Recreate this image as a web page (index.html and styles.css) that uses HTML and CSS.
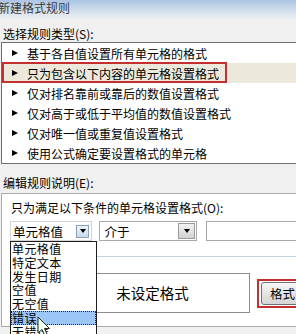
FILE: index.html
```html
<!DOCTYPE html>
<html lang="zh-CN">
<head>
    <meta charset="UTF-8">
    <title>新建格式规则</title>
    <link rel="stylesheet" href="styles.css">
</head>
<body>
    <div class="dialog">
        <div class="titlebar">新建格式规则</div>

        <div class="group-label">选择规则类型(S):</div>
        <div class="rule-list">
            <div class="rule-row"><span class="arrow"></span>基于各自值设置所有单元格的格式</div>
            <div class="rule-row selected"><span class="arrow"></span>只为包含以下内容的单元格设置格式</div>
            <div class="rule-row"><span class="arrow"></span>仅对排名靠前或靠后的数值设置格式</div>
            <div class="rule-row"><span class="arrow"></span>仅对高于或低于平均值的数值设置格式</div>
            <div class="rule-row"><span class="arrow"></span>仅对唯一值或重复值设置格式</div>
            <div class="rule-row"><span class="arrow"></span>使用公式确定要设置格式的单元格</div>
            <div class="mark-row"></div>
        </div>

        <div class="group-label second">编辑规则说明(E):</div>
        <div class="rule-panel">
            <div class="panel-label">只为满足以下条件的单元格设置格式(O):</div>
            <div class="controls">
                <div class="combo combo-open">
                    <span>单元格值</span>
                    <span class="drop-btn small"><span class="tri"></span></span>
                </div>
                <div class="combo combo-op">
                    <span>介于</span>
                    <span class="drop-btn"><span class="tri"></span></span>
                </div>
                <div class="textbox"></div>
            </div>
            <div class="separator"></div>
            <div class="preview-row">
                <div class="preview">未设定格式</div>
                <div class="mark-btn">
                    <button class="format-btn">格式(F)...</button>
                </div>
            </div>

            <ul class="drop-list">
                <li>单元格值</li>
                <li>特定文本</li>
                <li>发生日期</li>
                <li>空值</li>
                <li>无空值</li>
                <li class="hover">错误</li>
                <li>无错误</li>
            </ul>
            <svg class="cursor" width="14" height="22" viewBox="0 0 14 22">
                <path d="M1 1 L1 17 L5 13.5 L8 20 L10.5 19 L7.5 12.5 L12.5 12.5 Z" fill="#f4fff4" stroke="#1c2a1c" stroke-width="1"/>
            </svg>
        </div>
    </div>
</body>
</html>
```
FILE: styles.css
```css
body {
    margin: 0;
    width: 296px;
    height: 334px;
    overflow: hidden;
    background: #f0f0f0;
    font-family: "Noto Sans CJK SC", "Noto Sans", sans-serif;
    font-size: 12px;
    color: #000;
}
.dialog {
    width: 340px;
}
.titlebar {
    height: 20px;
    line-height: 16px;
    text-indent: -2px;
    color: #3c3c3c;
    background: linear-gradient(#abc5e3, #d6e1ec 60%, #eef0f2);
}
.group-label {
    margin-top: 7px;
    padding-left: 3px;
    line-height: 14px;
}
.group-label.second {
    margin-top: 12px;
}
.rule-list {
    position: relative;
    margin: 1px 0 0 1px;
    border: 1px solid #6f6f6f;
    border-right: none;
    background: #fff;
}
.rule-row {
    display: flex;
    align-items: center;
    height: 20px;
    white-space: nowrap;
}
.rule-row.selected {
    background: #ece9dc;
}
.arrow {
    width: 0;
    height: 0;
    margin: 0 9px 0 10px;
    border-left: 6px solid #000;
    border-top: 3.5px solid transparent;
    border-bottom: 3.5px solid transparent;
}
.mark-row {
    position: absolute;
    left: 0;
    top: 19px;
    width: 221px;
    height: 17px;
    border: 2px solid #c3302f;
}
.rule-panel {
    position: relative;
    height: 125px;
    margin: 3px 0 0 1px;
    padding: 7px 0 0 9px;
    border: 1px solid #a9a9a9;
    border-right: none;
    background: #fff;
}
.panel-label {
    line-height: 14px;
}
.controls {
    display: flex;
    margin-top: 6px;
    height: 20px;
}
.combo {
    display: flex;
    align-items: center;
    justify-content: space-between;
    box-sizing: border-box;
    height: 20px;
    font-size: 12.5px;
}
.combo-open {
    width: 86px;
    padding: 0 2px 0 2px;
    margin-left: -1px;
    border: 1px solid #d4d4d4;
}
.combo-op {
    width: 102px;
    margin-left: 7px;
    padding: 0 1px 0 4px;
    border: 1px solid #a8a8a8;
}
.drop-btn {
    display: flex;
    align-items: center;
    justify-content: center;
    box-sizing: border-box;
    width: 17px;
    height: 16px;
    border: 1px solid #9a9a9a;
    background: linear-gradient(#f2f2f2, #d2d2d2);
}
.drop-btn.small {
    width: 13px;
    height: 13px;
    border-color: #8da2b8;
    background: linear-gradient(#eef4fb, #c7d9ec);
}
.tri {
    width: 0;
    height: 0;
    border-top: 4px solid #000;
    border-left: 3.5px solid transparent;
    border-right: 3.5px solid transparent;
}
.textbox {
    width: 140px;
    height: 20px;
    margin-left: 9px;
    box-sizing: border-box;
    border: 1px solid #a8a8a8;
}
.separator {
    height: 1px;
    margin-top: 15px;
    background: #c3d2db;
}
.preview-row {
    display: flex;
    align-items: center;
    margin-top: 16px;
}
.preview {
    width: 195px;
    height: 40px;
    margin-left: 44px;
    box-sizing: border-box;
    border: 1px solid #8c8c8c;
    font-size: 14.5px;
    line-height: 38px;
    text-align: center;
}
.mark-btn {
    margin-left: 7px;
    padding: 1px 2px;
    border: 2px solid #c3302f;
}
.format-btn {
    display: block;
    width: 70px;
    height: 23px;
    padding: 0 0 0 8px;
    text-align: left;
    font-family: inherit;
    font-size: 12.5px;
    color: #000;
    border: 1px solid #707070;
    border-radius: 3px;
    background: linear-gradient(#f7f7f7, #e4e4e4 50%, #d6d6d6);
}
.drop-list {
    position: absolute;
    left: 8px;
    top: 47px;
    width: 85px;
    margin: 0;
    padding: 0;
    list-style: none;
    border: 1px solid #1e1e1e;
    background: #fff;
    font-size: 12px;
    letter-spacing: 0.4px;
}
.drop-list li {
    height: 13.8px;
    line-height: 13.8px;
    padding-left: 1px;
    box-sizing: border-box;
}
.drop-list li.hover {
    background: #9cc6f6;
    outline: 1px dotted #2a2a2a;
    outline-offset: -1px;
}
.cursor {
    position: absolute;
    left: 35px;
    top: 122px;
}
```
